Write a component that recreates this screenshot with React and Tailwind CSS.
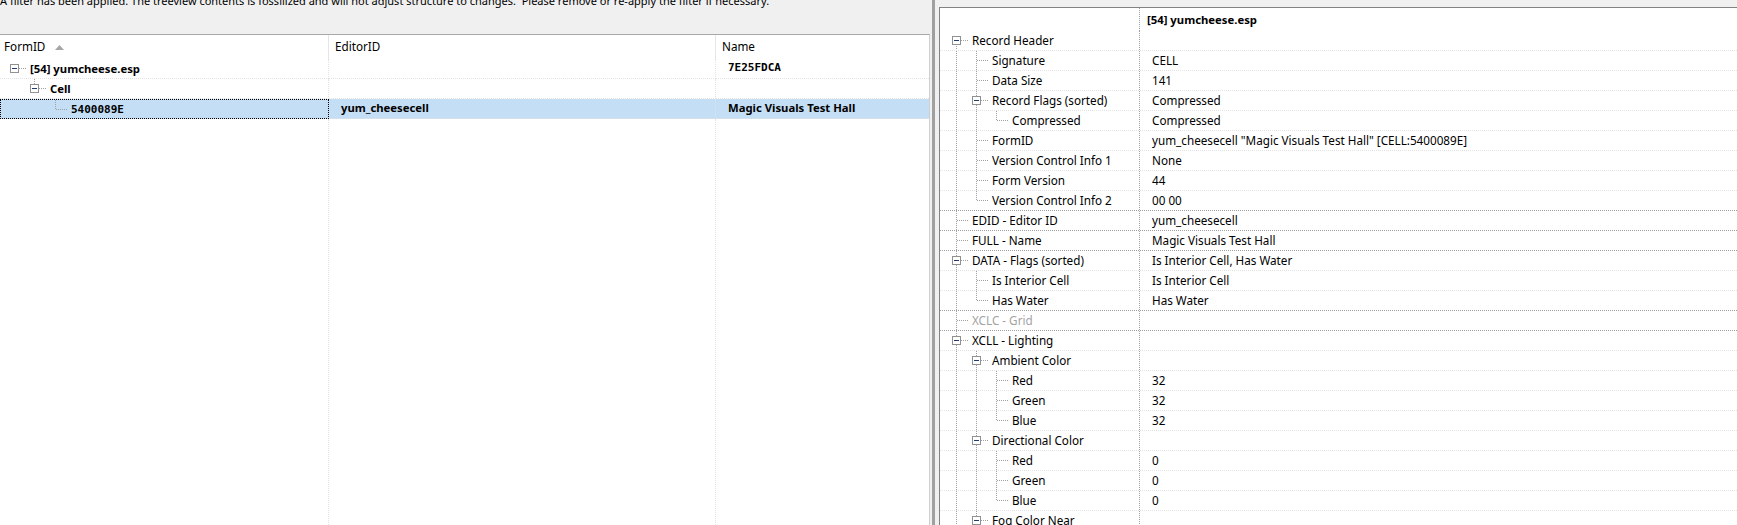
import React from 'react';

const LINE = '#a0a0a0';
const SANS = "font-['Noto_Sans',sans-serif]";
const MONO = "font-['DejaVu_Sans_Mono',monospace]";

// record view tree
const record = [
  {
    label: 'Record Header',
    children: [
      { label: 'Signature', value: 'CELL' },
      { label: 'Data Size', value: '141' },
      {
        label: 'Record Flags (sorted)',
        value: 'Compressed',
        children: [{ label: 'Compressed', value: 'Compressed' }],
      },
      { label: 'FormID', value: 'yum_cheesecell "Magic Visuals Test Hall" [CELL:5400089E]' },
      { label: 'Version Control Info 1', value: 'None' },
      { label: 'Form Version', value: '44' },
      { label: 'Version Control Info 2', value: '00 00' },
    ],
  },
  { label: 'EDID - Editor ID', value: 'yum_cheesecell' },
  { label: 'FULL - Name', value: 'Magic Visuals Test Hall' },
  {
    label: 'DATA - Flags (sorted)',
    value: 'Is Interior Cell, Has Water',
    children: [
      { label: 'Is Interior Cell', value: 'Is Interior Cell' },
      { label: 'Has Water', value: 'Has Water' },
    ],
  },
  { label: 'XCLC - Grid', muted: true },
  {
    label: 'XCLL - Lighting',
    children: [
      {
        label: 'Ambient Color',
        children: [
          { label: 'Red', value: '32' },
          { label: 'Green', value: '32' },
          { label: 'Blue', value: '32' },
        ],
      },
      {
        label: 'Directional Color',
        children: [
          { label: 'Red', value: '0' },
          { label: 'Green', value: '0' },
          { label: 'Blue', value: '0' },
        ],
      },
      {
        label: 'Fog Color Near',
        children: [
          { label: 'Red', value: '0' },
          { label: 'Green', value: '0' },
          { label: 'Blue', value: '0' },
        ],
      },
      { label: 'Fog Near', value: '0.000000' },
    ],
  },
  { label: 'XCMT - Music Type', muted: true },
];

function flatten(nodes, level, guides, out) {
  nodes.forEach((node, i) => {
    const last = i === nodes.length - 1;
    out.push({
      ...node,
      level,
      guides,
      first: level === 0 && i === 0,
      last,
      box: !!node.children,
    });
    if (node.children) flatten(node.children, level + 1, [...guides, !last], out);
    if (level === 0) out[out.length - 1].dark = true;
  });
  return out;
}

const recordRows = flatten(record, 0, [], []);

const listRows = [
  { guides: [], first: true, last: true, box: true, id: '[54] yumcheese.esp', name: '7E25FDCA' },
  { guides: [false], last: true, box: true, id: 'Cell' },
  {
    guides: [false, false],
    last: true,
    id: '5400089E',
    mono: true,
    editor: 'yum_cheesecell',
    name: 'Magic Visuals Test Hall',
    selected: true,
  },
];

function TreeLines({ guides, first, last, box, h = 19 }) {
  const mid = 9;
  return (
    <>
      {guides.map((on, i) => (
        <svg key={i} width="20" height={h} className="shrink-0">
          {on && (
            <line x1="10.5" y1="0" x2="10.5" y2={h} stroke={LINE} strokeDasharray="1 1" shapeRendering="crispEdges" />
          )}
        </svg>
      ))}
      <svg width="26" height={h} className="shrink-0">
        {!(first && last) && (
          <line
            x1="10.5"
            y1={first ? mid : 0}
            x2="10.5"
            y2={last ? mid + 1 : h}
            stroke={LINE}
            strokeDasharray="1 1"
            shapeRendering="crispEdges"
          />
        )}
        <line
          x1={box ? 15 : 11}
          y1={mid + 0.5}
          x2="23"
          y2={mid + 0.5}
          stroke={LINE}
          strokeDasharray="1 1"
          shapeRendering="crispEdges"
        />
        {box && (
          <g shapeRendering="crispEdges">
            <rect x="6.5" y={mid - 3.5} width="8" height="8" fill="#fff" stroke="#919191" />
            <line x1="8" y1={mid + 0.5} x2="13" y2={mid + 0.5} stroke="#1e3c72" />
          </g>
        )}
      </svg>
    </>
  );
}

function SortArrow() {
  return (
    <svg width="9" height="5" className="ml-[10px] shrink-0">
      <polygon points="0,5 4.5,0 9,5" fill="#a6a6a6" />
    </svg>
  );
}

function FileList() {
  return (
    <div className="flex-1 flex flex-col bg-white border-t border-r border-t-[#a8a8a8] border-r-[#cfcfcf] min-h-0">
      {/* Header */}
      <div className="flex h-[24px] shrink-0 text-[11.7px] text-black">
        <div className="w-[329px] shrink-0 flex items-center pl-[4px] border-r border-[#e5e5e5]">
          <span>FormID</span>
          <SortArrow />
        </div>
        <div className="w-[387px] shrink-0 flex items-center pl-[6px] border-r border-[#e5e5e5]">EditorID</div>
        <div className="flex-1 flex items-center pl-[6px]">Name</div>
      </div>

      {/* Rows */}
      {listRows.map((r, i) => (
        <div key={i} className={`flex h-[20px] shrink-0 font-bold text-[11.3px] text-black ${r.selected ? 'bg-[#c4def5]' : ''}`}>
          <div
            className={`w-[329px] shrink-0 flex items-center pl-[4px] ${
              r.selected
                ? 'border border-dotted border-black'
                : 'border-b border-r border-dotted border-[#e2e2e2]'
            }`}
          >
            <TreeLines guides={r.guides} first={r.first} last={r.last} box={r.box} />
            <span className={`leading-[19px] whitespace-nowrap ${r.mono ? `${MONO} text-[11px]` : ''}`}>{r.id}</span>
          </div>
          <div className="w-[387px] shrink-0 flex items-center pl-[12px] border-b border-r border-dotted border-[#e2e2e2] whitespace-nowrap">
            {r.editor}
          </div>
          <div
            className={`flex-1 flex items-center pl-[12px] border-b border-dotted border-[#e2e2e2] whitespace-nowrap ${
              r.selected ? '' : `${MONO} text-[11px]`
            }`}
          >
            {r.name}
          </div>
        </div>
      ))}

      {/* Empty space with column grid */}
      <div className="flex flex-1">
        <div className="w-[329px] shrink-0 border-r border-dotted border-[#e2e2e2]" />
        <div className="w-[387px] shrink-0 border-r border-dotted border-[#e2e2e2]" />
        <div className="flex-1" />
      </div>
    </div>
  );
}

function RecordView() {
  return (
    <div className="flex-1 min-w-0 pt-[7px] flex flex-col">
      <div className="flex-1 bg-white border-t border-l border-[#828282] overflow-hidden text-[11.7px] text-black">
        <div className="flex h-[23px]">
          <div className="w-[200px] shrink-0 border-r border-dotted border-[#a0a0a0]" />
          <div className="pl-[7px] font-bold text-[11.3px] leading-[23px] whitespace-nowrap">[54] yumcheese.esp</div>
        </div>
        {recordRows.map((r, i) => (
          <div
            key={i}
            className={`flex h-[20px] border-b border-dotted ${r.dark ? 'border-[#a0a0a0]' : 'border-[#e3e3e3]'}`}
          >
            <div className="w-[200px] shrink-0 flex items-center pl-[6px] border-r border-dotted border-[#a0a0a0] overflow-hidden">
              <TreeLines guides={r.guides} first={r.first} last={r.last} box={r.box} />
              <span className={`leading-[19px] whitespace-nowrap ${r.muted ? 'text-[#a3a3a3]' : ''}`}>{r.label}</span>
            </div>
            <div className="flex-1 flex items-center pl-[12px] leading-[19px] whitespace-nowrap">{r.value}</div>
          </div>
        ))}
      </div>
    </div>
  );
}

export default function App() {
  return (
    <div className={`w-[1737px] h-[525px] flex overflow-hidden bg-[#f0f0f0] ${SANS} text-[12px]`}>
      <div className="w-[930px] shrink-0 flex flex-col">
        <div className="h-[34px] shrink-0 overflow-hidden">
          <div className="-mt-[7px] whitespace-pre text-[11px] leading-[16px] text-black">
            {'A filter has been applied. The treeview contents is fossilized and will not adjust structure to changes.  Please remove or re-apply the filter if necessary.'}
          </div>
        </div>
        <FileList />
      </div>

      {/* Splitter */}
      <div className="w-[9px] shrink-0 flex">
        <div className="ml-[2px] w-[3px] bg-[#a0a0a0]" />
      </div>

      <RecordView />
    </div>
  );
}
